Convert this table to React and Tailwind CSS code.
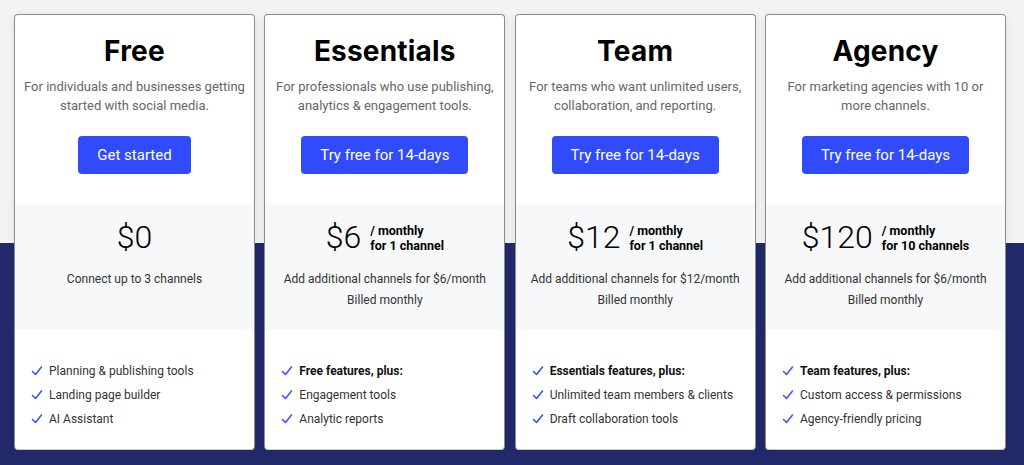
import React from "react";

const plans = [
  {
    name: "Free",
    desc: ["For individuals and businesses getting", "started with social media."],
    cta: "Get started",
    price: "$0",
    per: null,
    notes: ["Connect up to 3 channels"],
    features: [
      { t: "Planning & publishing tools" },
      { t: "Landing page builder" },
      { t: "AI Assistant" },
    ],
  },
  {
    name: "Essentials",
    desc: ["For professionals who use publishing,", "analytics & engagement tools."],
    cta: "Try free for 14-days",
    price: "$6",
    per: ["/ monthly", "for 1 channel"],
    notes: ["Add additional channels for $6/month", "Billed monthly"],
    features: [
      { t: "Free features, plus:", b: true },
      { t: "Engagement tools" },
      { t: "Analytic reports" },
    ],
  },
  {
    name: "Team",
    desc: ["For teams who want unlimited users,", "collaboration, and reporting."],
    cta: "Try free for 14-days",
    price: "$12",
    per: ["/ monthly", "for 1 channel"],
    notes: ["Add additional channels for $12/month", "Billed monthly"],
    features: [
      { t: "Essentials features, plus:", b: true },
      { t: "Unlimited team members & clients" },
      { t: "Draft collaboration tools" },
    ],
  },
  {
    name: "Agency",
    desc: ["For marketing agencies with 10 or", "more channels."],
    cta: "Try free for 14-days",
    price: "$120",
    per: ["/ monthly", "for 10 channels"],
    notes: ["Add additional channels for $6/month", "Billed monthly"],
    features: [
      { t: "Team features, plus:", b: true },
      { t: "Custom access & permissions" },
      { t: "Agency-friendly pricing" },
    ],
  },
];

function Check() {
  return (
    <svg width="12" height="12" viewBox="0 0 12 12" className="shrink-0">
      <polyline points="1.5,6.5 4.5,9.5 10.5,2" fill="none" stroke="#3b55f0" strokeWidth="1.6" strokeLinecap="round" strokeLinejoin="round" />
    </svg>
  );
}

function Card({ p }) {
  return (
    <div className="w-[241px] h-[436px] bg-white border border-[#8c8c8c] border-b-[#c8c8c8] rounded-[4px] shadow-[0_2px_8px_rgba(0,0,0,0.08)] flex flex-col overflow-hidden">
      <div className="h-[188px] flex flex-col items-center pt-[19px]">
        <div className="h-[34px] leading-[34px] text-[28px] font-bold text-black font-['Inter',sans-serif] tracking-[0.2px]">
          {p.name}
        </div>
        <div className="mt-[8.5px] text-[13px] leading-[19px] text-[#666] text-center font-['Roboto',sans-serif]">
          {p.desc.map((d) => (
            <div key={d}>{d}</div>
          ))}
        </div>
        <div className="mt-[21.5px] h-[38px] px-[19px] flex items-center rounded-[4px] bg-[#2f4bfb] text-white text-[15px] font-['Roboto',sans-serif]">
          {p.cta}
        </div>
      </div>
      <div className="h-[127px] bg-[#f7f8f9] flex flex-col items-center pt-[16px] font-['Roboto',sans-serif]">
        <div className="h-[36px] flex items-center gap-[9px]">
          <span className="text-[32px] font-light text-black leading-[36px]">{p.price}</span>
          {p.per && (
            <span className="text-[12.5px] font-bold text-black leading-[15px] mt-[1px]">
              {p.per.map((x) => (
                <div key={x}>{x}</div>
              ))}
            </span>
          )}
        </div>
        <div className="mt-[13.5px] text-[12px] leading-[21px] text-[#333] text-center">
          {p.notes.map((n) => (
            <div key={n}>{n}</div>
          ))}
        </div>
      </div>
      <div className="flex-1 pt-[29px] pl-[16px] font-['Roboto',sans-serif]">
        {p.features.map((f) => (
          <div key={f.t} className="h-[24px] flex items-center gap-[6px]">
            <Check />
            <span className={"text-[12px] " + (f.b ? "font-bold text-[#111]" : "text-[#333]")}>{f.t}</span>
          </div>
        ))}
      </div>
    </div>
  );
}

export default function App() {
  return (
    <div className="w-[1024px] h-[465px] bg-[linear-gradient(to_bottom,#f3f3f3_243px,#222a6b_243px)] pt-[14px] pl-[14px]">
      <div className="w-[992px] flex justify-between">
        {plans.map((p) => (
          <Card key={p.name} p={p} />
        ))}
      </div>
    </div>
  );
}
